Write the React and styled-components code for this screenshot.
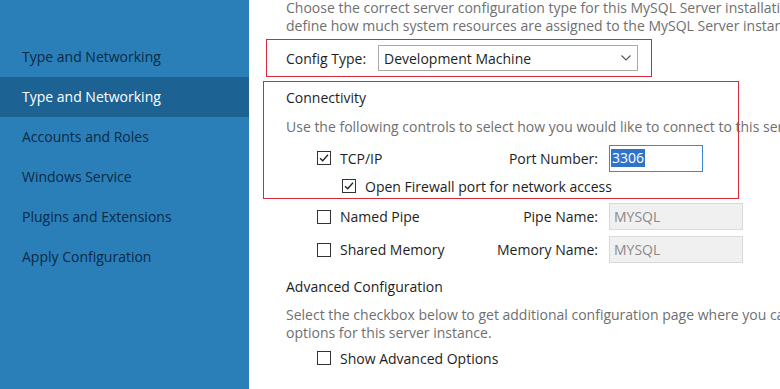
import React from "react";
import styled, { createGlobalStyle } from "styled-components";

const GlobalStyle = createGlobalStyle`
  body {
    margin: 0;
    background: #ffffff;
    font-family: "Open Sans", "Noto Sans", sans-serif;
    font-size: 14px;
    color: #1e1e1e;
  }
`;

const Page = styled.div`
  display: flex;
  width: 780px;
  height: 389px;
  overflow: hidden;
`;

const Sidebar = styled.nav`
  flex: 0 0 249px;
  background: #2a7fb8;
  padding-top: 37px;
`;

const NavItem = styled.div`
  height: 40px;
  line-height: 40px;
  padding-left: 22px;
  white-space: nowrap;
  color: ${(p) => (p.$active ? "#ffffff" : "#0c2a44")};
  background: ${(p) => (p.$active ? "#1c6393" : "transparent")};
`;

const Main = styled.main`
  flex: 1;
  min-width: 0;
  padding-left: 37px;
  margin-top: -1px;
  overflow: hidden;
`;

const Paragraph = styled.p`
  margin: ${(p) => p.$mt || 0}px 0 0;
  line-height: 18px;
  color: #6f6f6f;
  white-space: nowrap;
`;

const Heading = styled.div`
  margin-top: ${(p) => p.$mt || 0}px;
  line-height: 20px;
  color: #1e1e1e;
  white-space: nowrap;
`;

const ConfigBox = styled.div`
  box-sizing: border-box;
  display: flex;
  align-items: center;
  width: 386px;
  height: 38px;
  margin: 4px 0 0 -20px;
  padding-left: 19px;
  border: 1px solid #d6293a;
`;

const Label = styled.span`
  width: 92px;
  color: #1e1e1e;
  white-space: nowrap;
`;

const Select = styled.div`
  box-sizing: border-box;
  display: flex;
  align-items: center;
  justify-content: space-between;
  width: 260px;
  height: 26px;
  padding: 0 6px 0 5px;
  border: 1px solid #a9a9a9;
  background: #ffffff;
`;

const ConnBox = styled.div`
  box-sizing: border-box;
  width: 476px;
  height: 118px;
  margin: 4px 0 0 -23px;
  padding: 6px 0 0 22px;
  border: 1px solid #d6293a;
`;

const Row = styled.div`
  display: flex;
  align-items: center;
  height: ${(p) => p.$h || 26}px;
  margin-top: ${(p) => p.$mt || 0}px;
`;

const Option = styled.label`
  display: flex;
  align-items: center;
  gap: 9px;
  width: ${(p) => p.$w || 179}px;
  padding-left: ${(p) => p.$indent || 31}px;
  box-sizing: border-box;
  white-space: nowrap;
  color: #1e1e1e;
`;

const FieldLabel = styled.span`
  width: 133px;
  text-align: right;
  white-space: nowrap;
  color: #1e1e1e;
`;

const Input = styled.div`
  box-sizing: border-box;
  display: flex;
  align-items: center;
  width: ${(p) => p.$w || 94}px;
  height: ${(p) => p.$h || 27}px;
  margin-left: 11px;
  border: 1px solid ${(p) => (p.$disabled ? "#d9d9d9" : "#3c8ad6")};
  background: ${(p) => (p.$disabled ? "#f0f0f0" : "#ffffff")};
  color: ${(p) => (p.$disabled ? "#8a8a8a" : "#1e1e1e")};
  padding-left: ${(p) => (p.$disabled ? 4 : 1)}px;
`;

const Selected = styled.span`
  background: #3074c9;
  color: #ffffff;
  line-height: 18px;
  padding: 0 1px;
`;

const CheckSvg = styled.svg`
  flex: 0 0 auto;
  display: block;
`;

const Checkbox = ({ checked }) => (
  <CheckSvg width="14" height="14" viewBox="0 0 14 14">
    <rect x="0.5" y="0.5" width="13" height="13" fill="#fff" stroke="#333" />
    {checked && (
      <path d="M3 7.2 L5.7 9.8 L11 3.8" fill="none" stroke="#222" strokeWidth="1.3" />
    )}
  </CheckSvg>
);

const Chevron = () => (
  <svg width="10" height="6" viewBox="0 0 10 6">
    <path d="M0.5 0.5 L5 5 L9.5 0.5" fill="none" stroke="#555" strokeWidth="1.1" />
  </svg>
);

const navItems = [
  "Type and Networking",
  "Type and Networking",
  "Accounts and Roles",
  "Windows Service",
  "Plugins and Extensions",
  "Apply Configuration",
];

export default function App() {
  return (
    <>
      <GlobalStyle />
      <Page>
        <Sidebar>
          {navItems.map((item, i) => (
            <NavItem key={i} $active={i === 1}>
              {item}
            </NavItem>
          ))}
        </Sidebar>
        <Main>
          <Paragraph>
            Choose the correct server configuration type for this MySQL Server installation.
          </Paragraph>
          <Paragraph>
            define how much system resources are assigned to the MySQL Server instance.
          </Paragraph>
          <ConfigBox>
            <Label>Config Type:</Label>
            <Select>
              <span>Development Machine</span>
              <Chevron />
            </Select>
          </ConfigBox>
          <ConnBox>
            <Heading>Connectivity</Heading>
            <Paragraph $mt={10}>
              Use the following controls to select how you would like to connect to this server.
            </Paragraph>
            <Row $mt={9}>
              <Option>
                <Checkbox checked />
                TCP/IP
              </Option>
              <FieldLabel>Port Number:</FieldLabel>
              <Input>
                <Selected>3306</Selected>
              </Input>
            </Row>
            <Row $mt={2}>
              <Option $indent={56} $w={400}>
                <Checkbox checked />
                Open Firewall port for network access
              </Option>
            </Row>
          </ConnBox>
          <Row $h={29} $mt={3}>
            <Option>
              <Checkbox />
              Named Pipe
            </Option>
            <FieldLabel>Pipe Name:</FieldLabel>
            <Input $disabled $w={134}>MYSQL</Input>
          </Row>
          <Row $h={29} $mt={4}>
            <Option>
              <Checkbox />
              Shared Memory
            </Option>
            <FieldLabel>Memory Name:</FieldLabel>
            <Input $disabled $w={134}>MYSQL</Input>
          </Row>
          <Heading $mt={13}>Advanced Configuration</Heading>
          <Paragraph $mt={9}>
            Select the checkbox below to get additional configuration page where you can
          </Paragraph>
          <Paragraph>options for this server instance.</Paragraph>
          <Row $h={22} $mt={5}>
            <Option $w={300}>
              <Checkbox />
              Show Advanced Options
            </Option>
          </Row>
        </Main>
      </Page>
    </>
  );
}
